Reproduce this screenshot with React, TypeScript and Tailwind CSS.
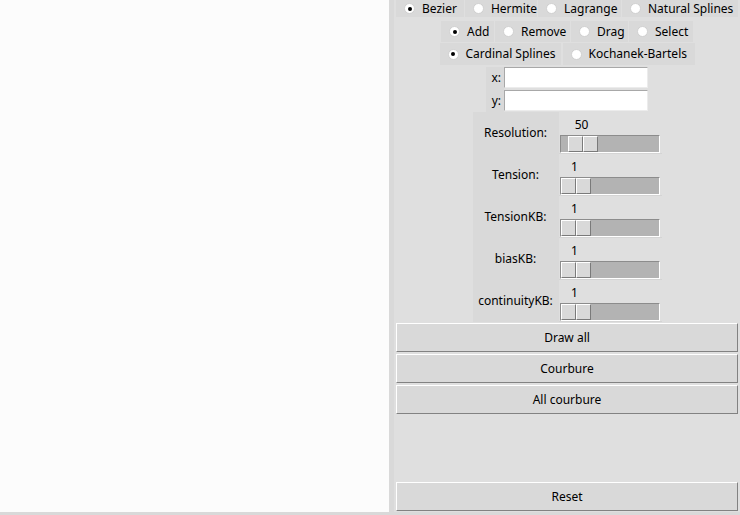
import React from "react";

const font = "font-['Noto_Sans',sans-serif] text-[12px] text-black";

interface RadioProps {
  label: string;
  checked?: boolean;
  w: string;
}

const Radio: React.FC<RadioProps> = ({ label, checked, w }) => (
  <div className={`flex items-center h-full bg-[#d9d9d9] pl-[8px] gap-[7px] ${w}`}>
    <div className="flex items-center justify-center w-[11px] h-[11px] rounded-full bg-white border border-[#d0d0d0]">
      {checked && <div className="w-[4px] h-[4px] rounded-full bg-black" />}
    </div>
    <span className="leading-none whitespace-nowrap">{label}</span>
  </div>
);

const sliders = [
  { label: "Resolution:", value: "50", shift: "ml-[7px]" },
  { label: "Tension:", value: "1", shift: "ml-0" },
  { label: "TensionKB:", value: "1", shift: "ml-0" },
  { label: "biasKB:", value: "1", shift: "ml-0" },
  { label: "continuityKB:", value: "1", shift: "ml-0" },
];

const Slider: React.FC<{ value: string; shift: string }> = ({ value, shift }) => (
  <div className="flex flex-col h-[42px] bg-[#dfdfdf] border-b border-[#d4d4d4] pl-px">
    <div className={`flex justify-center w-[30px] mt-[6px] h-[14px] leading-[14px] ${shift}`}>{value}</div>
    <div className="flex w-[100px] h-[18px] mt-[3px] bg-[#b3b3b3] border-t border-l border-[#8c8c8c] border-b border-r border-b-white border-r-white">
      <div className={`flex h-full ${shift}`}>
        <div className="w-[15px] h-full bg-[#d9d9d9] border-t border-l border-white border-b border-r border-b-[#7a7a7a] border-r-[#7a7a7a]" />
        <div className="w-[15px] h-full bg-[#d9d9d9] border-t border-l border-white border-b border-r border-b-[#7a7a7a] border-r-[#7a7a7a]" />
      </div>
    </div>
  </div>
);

const Button: React.FC<{ label: string }> = ({ label }) => (
  <button className="flex items-center justify-center h-[29px] mx-[2px] bg-[#d9d9d9] border-t border-l border-white border-b border-r border-b-[#828282] border-r-[#828282]">
    {label}
  </button>
);

const Entry = () => (
  <div className="w-[144px] h-[21px] bg-white border-t border-l border-[#a8a8a8] border-b border-r border-b-[#ececec] border-r-[#ececec]" />
);

export default function App() {
  return (
    <div className={`flex flex-col w-[740px] h-[515px] bg-[#d9d9d9] ${font}`}>
      <div className="flex h-[512px] gap-[5px]">
        <div className="w-[389px] h-full bg-[#fcfcfc]" />
        <div className="flex flex-col flex-1 bg-[#dfdfdf]">
          <div className="flex justify-center gap-px h-[17px] mt-0">
            <Radio label="Bezier" checked w="w-[68px]" />
            <Radio label="Hermite" w="w-[72px]" />
            <Radio label="Lagrange" w="w-[83px]" />
            <Radio label="Natural Splines" w="w-[116px]" />
          </div>
          <div className="flex justify-center gap-px h-[21px] mt-[4px]">
            <Radio label="Add" checked w="w-[53px]" />
            <Radio label="Remove" w="w-[75px]" />
            <Radio label="Drag" w="w-[57px]" />
            <Radio label="Select" w="w-[64px]" />
          </div>
          <div className="flex justify-center gap-[2px] h-[22px] mt-[1px]">
            <Radio label="Cardinal Splines" checked w="w-[121px]" />
            <Radio label="Kochanek-Bartels" w="w-[132px]" />
          </div>
          <div className="flex justify-center mt-[2px]">
            <div className="flex flex-col justify-around w-[18px] h-[45px] bg-[#d9d9d9] pr-[3px] items-end">
              <span className="leading-none">x:</span>
              <span className="leading-none">y:</span>
            </div>
            <div className="flex flex-col gap-[2px]">
              <Entry />
              <Entry />
            </div>
          </div>
          <div className="flex justify-center">
            <div className="flex flex-col w-[86px] bg-[#d9d9d9]">
              {sliders.map((s) => (
                <div key={s.label} className="flex items-center justify-center h-[42px] pb-[1px] whitespace-nowrap">
                  {s.label}
                </div>
              ))}
            </div>
            <div className="flex flex-col w-[103px]">
              {sliders.map((s) => (
                <Slider key={s.label} value={s.value} shift={s.shift} />
              ))}
            </div>
          </div>
          <div className="flex flex-col gap-[2px] mt-px">
            <Button label="Draw all" />
            <Button label="Courbure" />
            <Button label="All courbure" />
          </div>
          <div className="flex-1" />
          <Button label="Reset" />
          <div className="h-px" />
        </div>
      </div>
    </div>
  );
}
